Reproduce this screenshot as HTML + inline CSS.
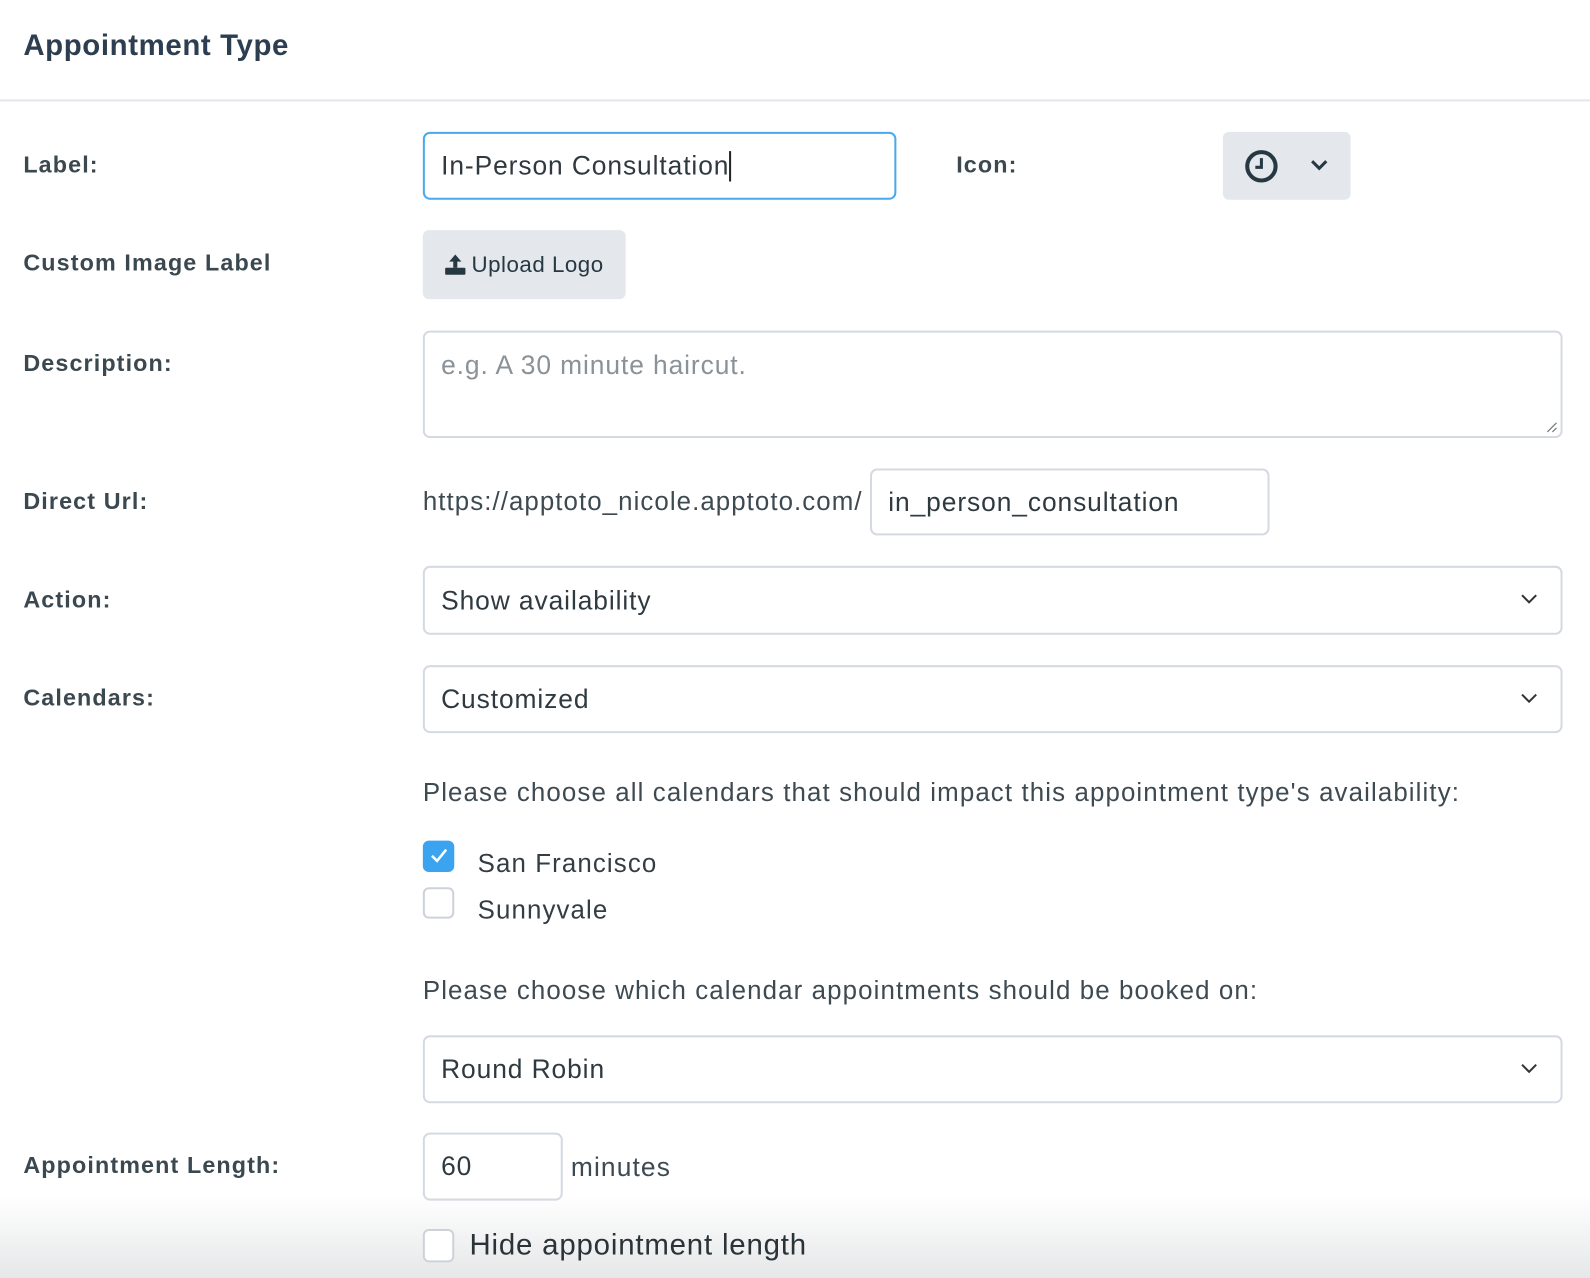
<!DOCTYPE html>
<html><head><meta charset="utf-8"><style>
*{box-sizing:border-box;margin:0;padding:0}
body{width:1590px;height:1278px;background:#fff;font-family:"Liberation Sans",sans-serif;color:#2f3d45;position:relative;overflow:hidden}
#w{position:absolute;left:0;top:0;width:1568px;height:1260px;transform:scale(1.014);transform-origin:0 0}
.a{position:absolute}
.lbl{position:absolute;left:23px;font-size:23px;font-weight:bold;color:#3b4850;letter-spacing:1.1px}
.inp{position:absolute;border:2px solid #d5d9e2;border-radius:7px;background:#fff;font-size:26px;color:#2f3a40;padding-left:16px;display:flex;align-items:center;letter-spacing:0.9px}
.chev{position:absolute;right:22px;top:50%;margin-top:-7px}
.txt{position:absolute;font-size:25.5px;color:#3e4a52;letter-spacing:1.1px}
.cb{position:absolute;width:31px;height:31px;border:2px solid #cdd2da;border-radius:6px;background:#fff}
</style></head><body>
<div class="a" style="left:0;top:1195px;width:1590px;height:83px;background:linear-gradient(#fff,#e6e7e8)"></div>
<div id="w">
<div class="a" style="left:23px;top:29px;font-size:29px;font-weight:bold;color:#2c3e50;letter-spacing:0.6px">Appointment Type</div>
<div class="a" style="left:0;top:98px;width:1590px;height:2px;background:#e3e6ea"></div>

<div class="lbl" style="top:149px">Label:</div>
<div class="inp" style="left:417px;top:130px;width:467px;height:67px;border-color:#4aa8ec">In-Person Consultation<span style="display:inline-block;width:2px;height:30px;background:#222"></span></div>
<div class="lbl" style="left:943px;top:149px">Icon:</div>
<div class="a" style="left:1206px;top:130px;width:126px;height:67px;background:#e4e7eb;border-radius:6px">
<svg class="a" style="left:21px;top:17px" width="34" height="34" viewBox="0 0 34 34"><circle cx="17" cy="17" r="14" fill="none" stroke="#263842" stroke-width="4"/><path d="M17 9v9h-6" fill="none" stroke="#263842" stroke-width="3"/></svg>
<svg class="a" style="left:86px;top:27px" width="18" height="12" viewBox="0 0 18 12"><path d="M2 2l7 7 7-7" fill="none" stroke="#263842" stroke-width="3"/></svg>
</div>

<div class="lbl" style="top:246px">Custom Image Label</div>
<div class="a" style="left:417px;top:227px;width:200px;height:68px;background:#e4e7eb;border-radius:6px;font-size:22px;color:#263842;display:flex;align-items:center;padding-left:21px;letter-spacing:0.5px">
<svg width="22" height="22" viewBox="0 0 22 22" style="margin-right:5px"><path d="M11 1l6 7h-4v6H9V8H5z" fill="#263842"/><rect x="1" y="14" width="20" height="7" rx="1" fill="#263842"/></svg>Upload Logo</div>

<div class="lbl" style="top:345px">Description:</div>
<div class="inp" style="left:417px;top:326px;width:1124px;height:106px;align-items:flex-start;padding-top:17px;color:#8a9298">e.g. A 30 minute haircut.
<svg class="a" style="right:3px;bottom:3px" width="12" height="12"><path d="M11 2L2 11M11 7L7 11" stroke="#777" stroke-width="1.2"/></svg></div>

<div class="lbl" style="top:481px">Direct Url:</div>
<div class="txt" style="left:417px;top:481px;letter-spacing:1.05px">https://apptoto_nicole.apptoto.com/</div>
<div class="inp" style="left:858px;top:462px;width:394px;height:66px">in_person_consultation</div>

<div class="lbl" style="top:578px">Action:</div>
<div class="inp" style="left:417px;top:558px;width:1124px;height:68px">Show availability<svg class="chev" width="18" height="12"><path d="M2 2l7 7 7-7" fill="none" stroke="#333" stroke-width="2"/></svg></div>

<div class="lbl" style="top:675px">Calendars:</div>
<div class="inp" style="left:417px;top:656px;width:1124px;height:67px">Customized<svg class="chev" width="18" height="12"><path d="M2 2l7 7 7-7" fill="none" stroke="#333" stroke-width="2"/></svg></div>

<div class="txt" style="left:417px;top:768px">Please choose all calendars that should impact this appointment type's availability:</div>
<div class="cb" style="left:417px;top:829px;background:#3ba4f0;border-color:#3ba4f0"><svg class="a" style="left:5px;top:5px" width="18" height="16"><path d="M2 8l5 5 9-11" fill="none" stroke="#fff" stroke-width="2.5"/></svg></div>
<div class="txt" style="left:471px;top:838px;color:#333d44">San Francisco</div>
<div class="cb" style="left:417px;top:875px"></div>
<div class="txt" style="left:471px;top:884px;color:#333d44">Sunnyvale</div>

<div class="txt" style="left:417px;top:963px">Please choose which calendar appointments should be booked on:</div>
<div class="inp" style="left:417px;top:1021px;width:1124px;height:67px">Round Robin<svg class="chev" width="18" height="12"><path d="M2 2l7 7 7-7" fill="none" stroke="#333" stroke-width="2"/></svg></div>

<div class="lbl" style="top:1136px">Appointment Length:</div>
<div class="inp" style="left:417px;top:1117px;width:138px;height:67px">60</div>
<div class="txt" style="left:563px;top:1136px;font-size:26px">minutes</div>

<div class="cb" style="left:417px;top:1212px;height:33px"></div>
<div class="txt" style="left:463px;top:1212px;font-size:29px;color:#2a3338;letter-spacing:0.8px">Hide appointment length</div>
</div>
</body></html>
